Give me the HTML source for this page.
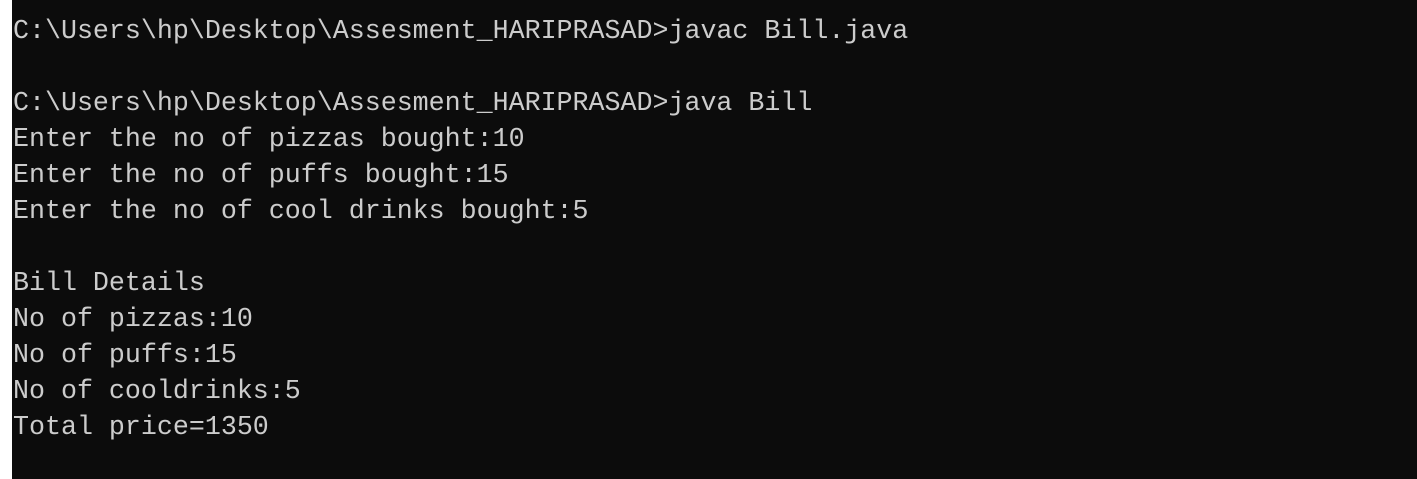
<!DOCTYPE html>
<html><head><style>
html,body{margin:0;padding:0;width:1417px;height:479px;overflow:hidden;background:#fff;}
.c{position:absolute;left:12px;top:0;width:1405px;height:479px;background:#0c0c0c;}
pre{margin:0;position:absolute;left:1px;top:14px;font-family:"Liberation Mono",monospace;font-size:26.65px;line-height:36px;color:#cccccc;}
</style></head><body><div class="c"><pre>C:\Users\hp\Desktop\Assesment_HARIPRASAD&gt;javac Bill.java

C:\Users\hp\Desktop\Assesment_HARIPRASAD&gt;java Bill
Enter the no of pizzas bought:10
Enter the no of puffs bought:15
Enter the no of cool drinks bought:5

Bill Details
No of pizzas:10
No of puffs:15
No of cooldrinks:5
Total price=1350</pre></div></body></html>
